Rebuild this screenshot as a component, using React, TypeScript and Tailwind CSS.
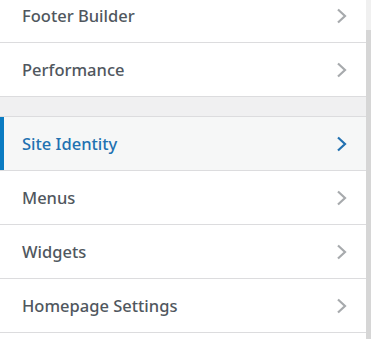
import React from "react";

const Chevron = ({ color }: { color: string }) => (
  <svg width="11" height="16" viewBox="0 0 11 16" fill="none">
    <path d="M2 1.5 L9 8 L2 14.5" stroke={color} strokeWidth="2.2" />
  </svg>
);

const Row = ({ label, active = false }: { label: string; active?: boolean }) => (
  <div
    className={
      "relative flex h-[54px] items-center justify-between border-b border-[#dcdcde] pl-[22px] pr-[19px] " +
      (active ? "bg-[#f6f7f7] text-[#2271b1]" : "bg-white text-[#50575e]")
    }
  >
    {active && <div className="absolute left-0 top-0 h-[53px] w-[4px] bg-[#0a7bc2]" />}
    <span className="pt-[1px] text-[16.5px] font-medium leading-none">{label}</span>
    <Chevron color={active ? "#2271b1" : "#a7aaad"} />
  </div>
);

export default function App() {
  return (
    <div
      className="flex h-[339px] w-[371px] overflow-hidden bg-white"
      style={{ fontFamily: '"Noto Sans", "Open Sans", sans-serif' }}
    >
      <div className="flex-1 overflow-hidden">
        <div className="-mt-[11px]">
          <Row label="Footer Builder" />
          <Row label="Performance" />
          <div className="h-[19px] bg-[#f0f0f1]" />
          <div className="border-t border-[#dcdcde]">
            <Row label="Site Identity" active />
            <Row label="Menus" />
            <Row label="Widgets" />
            <Row label="Homepage Settings" />
          </div>
        </div>
      </div>
      <div className="flex w-[5px] flex-col">
        <div className="h-[30px] bg-[#f0f0f0]" />
        <div className="flex-1 bg-[#d6d6d6]" />
      </div>
    </div>
  );
}
